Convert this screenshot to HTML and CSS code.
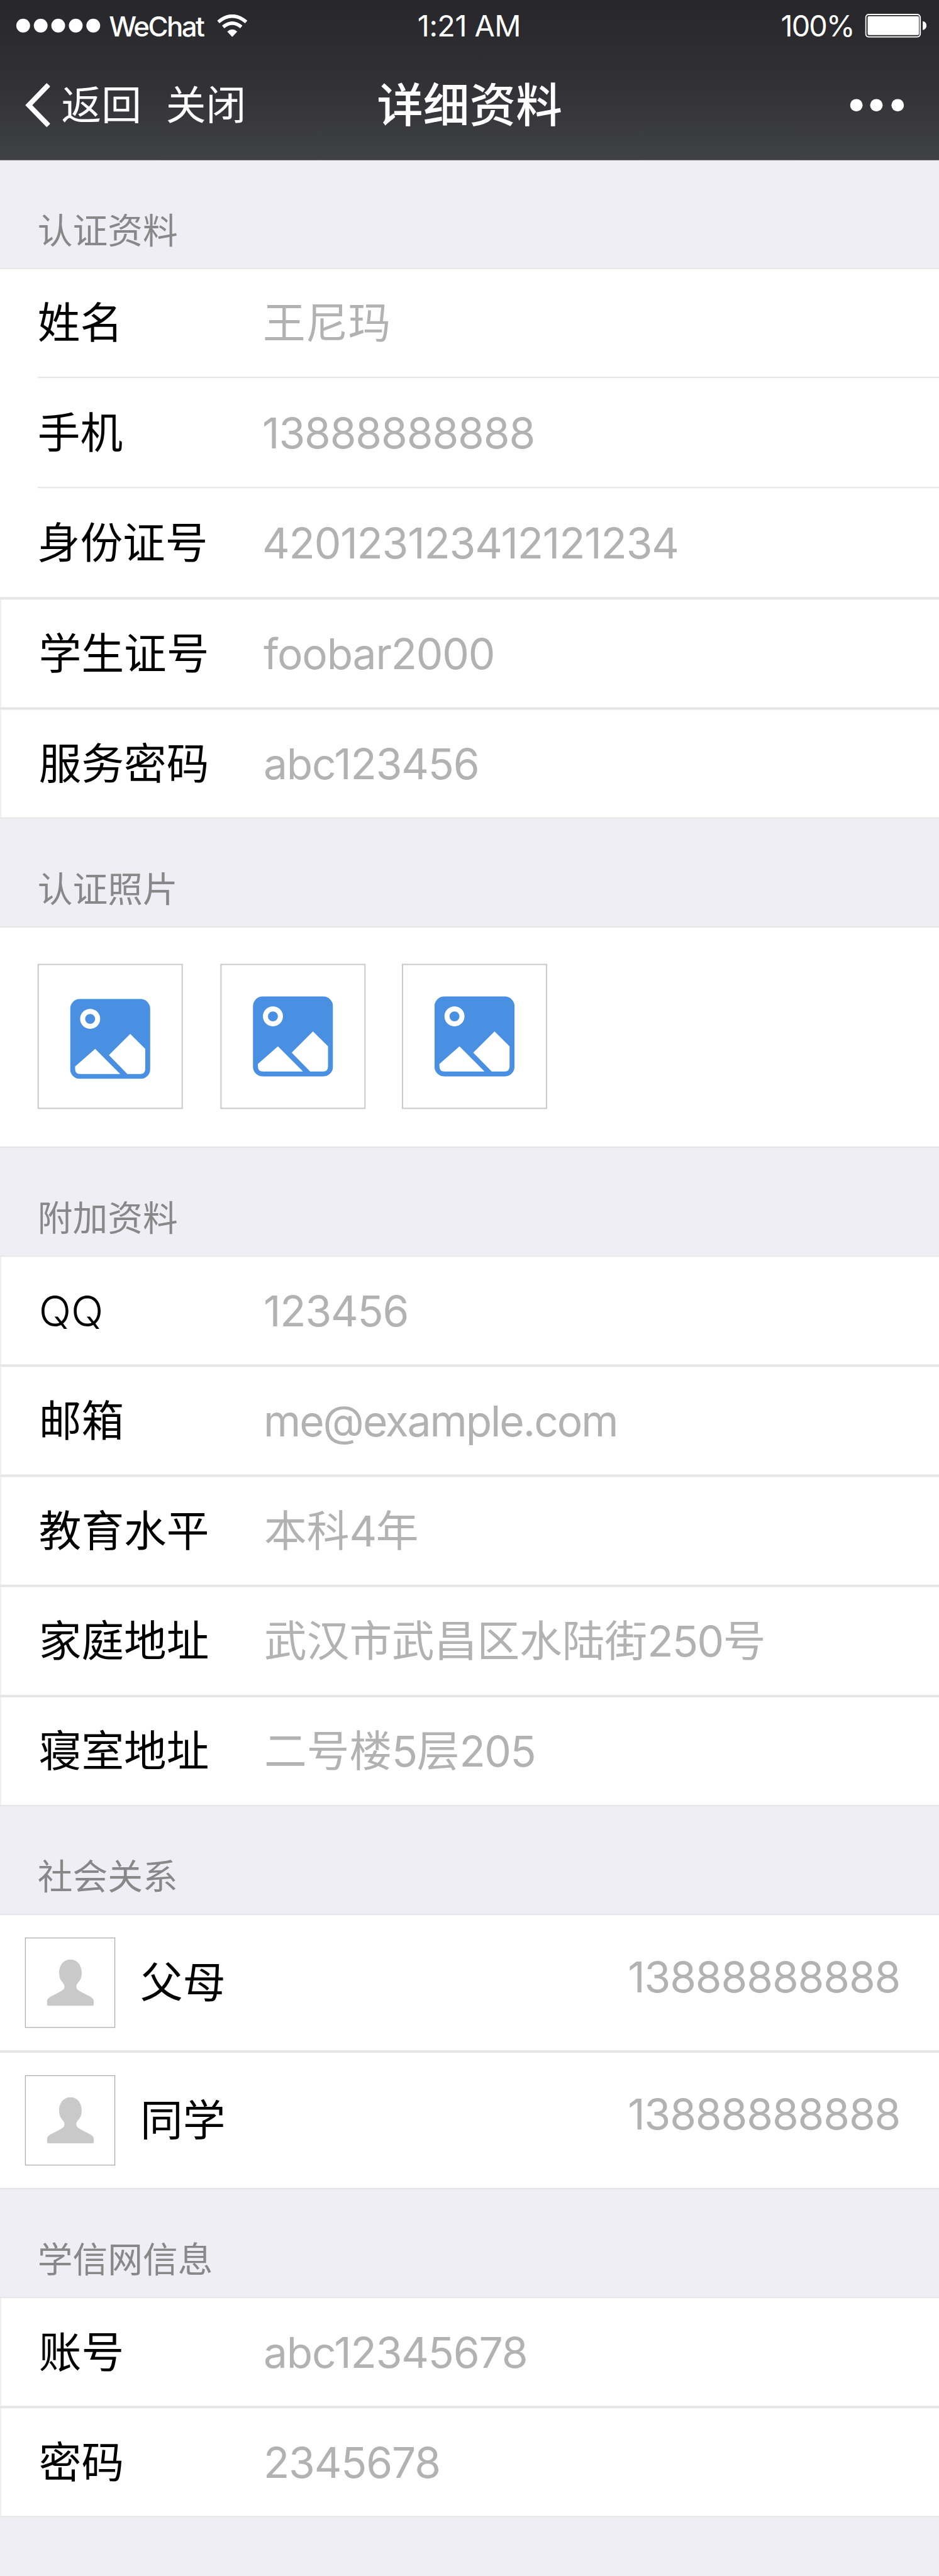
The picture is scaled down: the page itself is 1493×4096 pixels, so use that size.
FILE: index.html
```html
<!DOCTYPE html>
<html lang="zh-CN">
<head>
<meta charset="utf-8">
<title>详细资料</title>
<link rel="stylesheet" href="styles.css">
</head>
<body>
<svg class="defs" width="0" height="0">
  <symbol id="photo" viewBox="0 0 128 128">
    <rect width="128" height="128" rx="16" fill="#4a90e2"/>
    <circle cx="32" cy="32" r="12" fill="none" stroke="#fff" stroke-width="8"/>
    <path fill="#fff" d="M8 108 40 80 80 120H16Q8 120 8 112ZM62 90 96 56 120 80V112Q120 120 112 120H91.500Z"/>
  </symbol>
  <symbol id="person" viewBox="0 0 75 74">
    <path fill="#c9c9c9" d="M37.500 0C49 0 55.500 10 55.500 21C55.500 36 47 36 47 43C47 48 50 49 55 52C65 58 75 60 75 67V71Q75 74 72 74H3Q0 74 0 71V67C0 60 10 58 20 52C25 49 28 48 28 43C28 36 19.500 36 19.500 21C19.500 10 26 0 37.500 0Z"/>
  </symbol>
</svg>
<div class="screen">
  <header class="header">
    <div class="status">
      <div class="status-left">
        <div class="signal"><i></i><i></i><i></i><i></i><i></i></div>
        <span class="carrier">WeChat</span>
        <svg class="wifi" viewBox="0 0 48 36" width="48" height="36">
          <path fill="#fff" d="M24 36 16 27.500Q24 20.500 32 27.500Z"/>
          <path fill="none" stroke="#fff" stroke-width="5.500" d="M9.500 20Q24 8 38.500 20M1.700 12Q24 -6.500 46.300 12"/>
        </svg>
      </div>
      <span class="time">1:21 AM</span>
      <div class="status-right">
        <span class="percent">100%</span>
        <svg class="battery" viewBox="0 0 98 38" width="98" height="38">
          <rect x="1" y="1" width="87" height="36" rx="5" fill="none" stroke="#fff" stroke-width="2"/>
          <rect x="4" y="4" width="82" height="30" rx="2" fill="#fff"/>
          <path fill="#fff" d="M92 12Q98 13 98 19T92 26Z"/>
        </svg>
      </div>
    </div>
    <nav class="nav">
      <div class="nav-left">
        <svg class="back" viewBox="0 0 40 70" width="40" height="70"><path fill="none" stroke="#fff" stroke-width="8" d="M37.500 2.500 6 35 37.500 67.500"/></svg>
        <span>返回</span>
        <span class="close">关闭</span>
      </div>
      <h1 class="title">详细资料</h1>
      <svg class="more" viewBox="0 0 86 20" width="86" height="20"><g fill="#fff"><circle cx="10" cy="10" r="10"/><circle cx="42" cy="10" r="10"/><circle cx="76" cy="10" r="10"/></g></svg>
    </nav>
  </header>

  <h2 class="group">认证资料</h2>
  <section class="list">
    <div class="row lined"><span class="label">姓名</span><span class="value">王尼玛</span></div>
    <div class="row lined tall"><span class="label">手机</span><span class="value latin">13888888888</span></div>
    <div class="row tall"><span class="label">身份证号</span><span class="value latin">420123123412121234</span></div>
    <div class="row inset split"><span class="label">学生证号</span><span class="value latin">foobar2000</span></div>
    <div class="row inset split"><span class="label">服务密码</span><span class="value latin">abc123456</span></div>
  </section>

  <h2 class="group">认证照片</h2>
  <section class="list photos">
    <div class="photo first"><svg width="128" height="128"><use href="#photo"/></svg></div>
    <div class="photo"><svg width="128" height="128"><use href="#photo"/></svg></div>
    <div class="photo third"><svg width="128" height="128"><use href="#photo"/></svg></div>
  </section>

  <h2 class="group">附加资料</h2>
  <section class="list">
    <div class="row inset"><span class="label light">QQ</span><span class="value latin">123456</span></div>
    <div class="row inset split"><span class="label">邮箱</span><span class="value latin email">me@example.com</span></div>
    <div class="row inset split"><span class="label">教育水平</span><span class="value">本科<span class="digit">4</span>年</span></div>
    <div class="row inset split"><span class="label">家庭地址</span><span class="value">武汉市武昌区水陆街<span class="digit">250</span>号</span></div>
    <div class="row inset split"><span class="label">寝室地址</span><span class="value">二号楼<span class="digit">5</span>层<span class="digit">205</span></span></div>
  </section>

  <h2 class="group">社会关系</h2>
  <section class="list">
    <div class="contact"><div class="avatar"><svg width="75" height="74"><use href="#person"/></svg></div><span class="name">父母</span><span class="value latin phone">13888888888</span></div>
    <div class="contact split"><div class="avatar"><svg width="75" height="74"><use href="#person"/></svg></div><span class="name">同学</span><span class="value latin phone">13888888888</span></div>
  </section>

  <h2 class="group">学信网信息</h2>
  <section class="list">
    <div class="row inset"><span class="label">账号</span><span class="value latin">abc12345678</span></div>
    <div class="row inset split"><span class="label">密码</span><span class="value latin">2345678</span></div>
  </section>
</div>
</body>
</html>
```
FILE: styles.css
```css
* { box-sizing: border-box; }

html, body {
  margin: 0;
  width: 1493px;
  height: 4096px;
  overflow: hidden;
  background: #efeef4;
}

.defs { display: block; height: 0; }

.screen {
  width: 1500px;
  height: 4116px;
  transform: scale(0.99533, 0.99514);
  transform-origin: 0 0;
  background: #efeef4;
  color: #000;
  font-family: Inter, "Noto Sans CJK SC", sans-serif;
  white-space: nowrap;
}

svg { display: block; flex: none; }

.header {
  height: 256px;
  color: #fff;
  background: linear-gradient(#27272b, #313135 50%, #404145);
}

.status {
  display: grid;
  grid-template-columns: 1fr auto 1fr;
  align-items: center;
  height: 84px;
  padding: 0 20px 2px 26px;
  font-size: 47px;
  line-height: 60px;
}

.status-left, .status-right, .nav-left { display: flex; align-items: center; }
.status-right { justify-content: flex-end; gap: 18px; }
.signal { display: flex; gap: 6px; }
.signal i { width: 22px; height: 22px; border-radius: 50%; background: #fff; }
.carrier { width: 150px; margin: 2px 23px 0 14px; font-size: 44px; font-weight: 500; letter-spacing: -2.600px; }
.time { margin-right: 7px; letter-spacing: -0.5px; }
.percent { letter-spacing: -2px; }

.nav {
  display: grid;
  grid-template-columns: 1fr auto 1fr;
  align-items: center;
  height: 172px;
  padding: 0 56px 5px 40px;
}

.nav-left { font-size: 64px; line-height: 90px; }
.back { margin-right: 18px; }
.close { margin-left: 39px; }

.title { margin: 0 0 0 16px; font-size: 74px; line-height: 100px; font-weight: 500; }
.more { justify-self: end; }

.group {
  height: 172px;
  margin: 0;
  padding: 73px 60px 0;
  color: #888;
  font-size: 56px;
  line-height: 80px;
  font-weight: 400;
}

.list {
  background: #fff;
  border-top: 2px solid #e5e5e5;
  border-bottom: 2px solid #e5e5e5;
}

.row {
  display: grid;
  grid-template-columns: 360px 1fr;
  align-items: center;
  height: 172px;
  padding-left: 60px;
  font-size: 68px;
  line-height: 96px;
}
.row.lined { height: 174px; background: linear-gradient(#e5e5e5, #e5e5e5) 60px 100% / 1440px 2px no-repeat; padding-bottom: 2px; }
.row.lined.tall { height: 176px; }
.row.tall { height: 174px; }
.row.inset { border-left: 2px solid #efeef4; }
.split { border-top: 4px solid #e5e5e5; }
.row.split { height: 176px; border-left: 0; padding-left: 62px; box-shadow: inset 2px 0 #efeef4; }

.light { font-weight: 350; }
.value { color: #b2b2b2; }
.latin { margin-left: -1px; letter-spacing: -1.200px; }
.digit { letter-spacing: -1.500px; }
.email { letter-spacing: -2.100px; }

.photos { display: flex; height: 354px; padding: 58px 60px; }
.photo {
  display: grid;
  place-items: center;
  width: 232px;
  height: 232px;
  margin-right: 60px;
  border: 2px solid #c9c9c9;
}
.photo.first { padding-top: 8px; }
.photo.third { margin-left: -2px; }

.contact {
  display: flex;
  align-items: center;
  height: 216px;
  padding: 0 62px 0 40px;
  font-size: 68px;
  line-height: 96px;
}
.contact.split { height: 220px; }
.avatar { display: grid; place-items: center; width: 144px; height: 144px; border: 1px solid #999; }
.name { margin-left: 40px; }
.phone { margin: 0 0 20px auto; }
```
